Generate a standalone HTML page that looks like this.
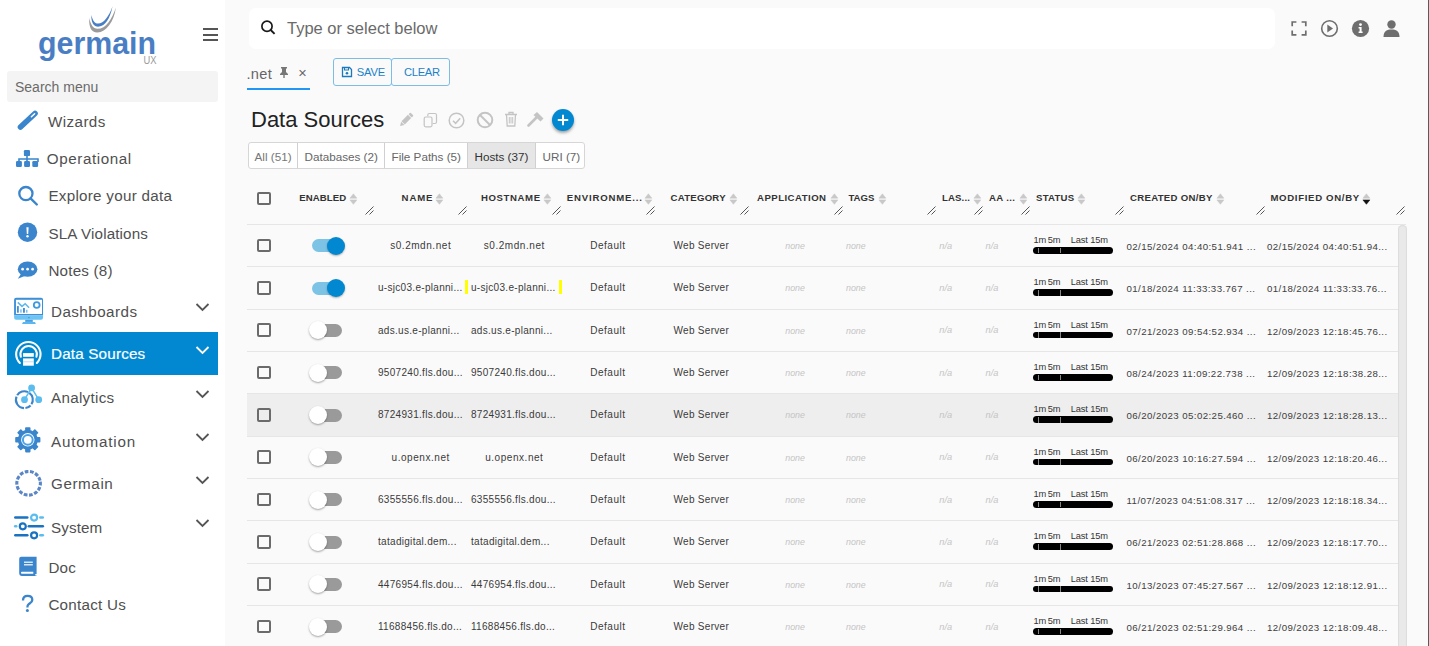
<!DOCTYPE html>
<html><head><meta charset="utf-8"><style>
html,body{margin:0;padding:0;width:1429px;height:646px;overflow:hidden;background:#fafafa;font-family:"Liberation Sans", sans-serif}
.a{position:absolute}
.t{position:absolute;line-height:1;white-space:nowrap}
</style></head><body>
<div class="a" style="left:0px;top:0px;width:225px;height:646px;background:#fff"></div>
<div class="a" style="left:225px;top:0px;width:1203px;height:646px;background:#fafafa"></div>
<div class="a" style="left:1428px;top:0px;width:1px;height:646px;background:#5a5a5a"></div>
<svg class="a" style="left:30px;top:0px" width="140" height="70" viewBox="0 0 140 70">
<path d="M59.3 18 C 58.5 28, 62 32.8, 67.5 32.5 C 76 32, 84 22, 85.9 7.4 C 82 19, 76 28.8, 67.5 28.8 C 63 28.8, 60.5 24, 59.3 18 Z" fill="#9b9b9b"/>
<path d="M61.4 14.9 C 61 23, 64 27, 69 26.6 C 75 26, 80 19, 82.5 6.5 C 79 16, 74 23.5, 68 23.5 C 64.5 23.5, 62.5 20, 61.4 14.9 Z" fill="#4a7ec4"/>
<text x="8" y="54" font-family="Liberation Sans" font-weight="700" font-size="32" fill="#4a7ec4" textLength="118" lengthAdjust="spacingAndGlyphs">germain</text>
<text x="113.5" y="64" font-family="Liberation Sans" font-size="10" fill="#999" textLength="13" lengthAdjust="spacingAndGlyphs">UX</text>
</svg>
<div class="a" style="left:203px;top:27.5px;width:14.5px;height:2.0px;background:#555"></div>
<div class="a" style="left:203px;top:33.5px;width:14.5px;height:2.0px;background:#555"></div>
<div class="a" style="left:203px;top:39.3px;width:14.5px;height:2.0px;background:#555"></div>
<div class="a" style="left:7px;top:71px;width:211px;height:31px;background:#f4f4f4;border-radius:3px"></div>
<div class="t" style="left:15.00px;top:80.15px;font-size:14px;color:#6b6b6b;font-weight:400;">Search menu</div>
<div class="a" style="left:7px;top:332px;width:211px;height:43px;background:#0288d1"></div>
<div class="t" style="left:48.00px;top:113.83px;font-size:15.2px;color:#505050;font-weight:400;letter-spacing:0.407px">Wizards</div>
<div class="t" style="left:46.80px;top:151.13px;font-size:15.2px;color:#505050;font-weight:400;letter-spacing:0.587px">Operational</div>
<div class="t" style="left:48.40px;top:188.03px;font-size:15.2px;color:#505050;font-weight:400;letter-spacing:0.28px">Explore your data</div>
<div class="t" style="left:48.40px;top:225.93px;font-size:15.2px;color:#505050;font-weight:400;letter-spacing:0.141px">SLA Violations</div>
<div class="t" style="left:48.40px;top:263.13px;font-size:15.2px;color:#505050;font-weight:400;letter-spacing:0.216px">Notes (8)</div>
<div class="t" style="left:51.00px;top:303.53px;font-size:15.2px;color:#505050;font-weight:400;letter-spacing:0.455px">Dashboards</div>
<div class="t" style="left:51.00px;top:346.23px;font-size:15.2px;color:#fff;font-weight:400;letter-spacing:0.199px;-webkit-text-stroke:0.2px #fff">Data Sources</div>
<div class="t" style="left:51.00px;top:390.43px;font-size:15.2px;color:#505050;font-weight:400;letter-spacing:0.302px">Analytics</div>
<div class="t" style="left:51.00px;top:433.83px;font-size:15.2px;color:#505050;font-weight:400;letter-spacing:0.819px">Automation</div>
<div class="t" style="left:51.00px;top:476.23px;font-size:15.2px;color:#505050;font-weight:400;letter-spacing:0.592px">Germain</div>
<div class="t" style="left:51.00px;top:519.63px;font-size:15.2px;color:#505050;font-weight:400;letter-spacing:0.112px">System</div>
<div class="t" style="left:48.40px;top:559.63px;font-size:15.2px;color:#505050;font-weight:400;letter-spacing:0.242px">Doc</div>
<div class="t" style="left:48.40px;top:597.23px;font-size:15.2px;color:#505050;font-weight:400;letter-spacing:0.264px">Contact Us</div>
<svg class="a" style="left:195px;top:301.6px" width="15" height="10" viewBox="0 0 15 10"><polyline points="1.5,2 7.5,8 13.5,2" fill="none" stroke="#555" stroke-width="1.8"/></svg>
<svg class="a" style="left:195px;top:345.3px" width="15" height="10" viewBox="0 0 15 10"><polyline points="1.5,2 7.5,8 13.5,2" fill="none" stroke="#fff" stroke-width="1.8"/></svg>
<svg class="a" style="left:195px;top:388.6px" width="15" height="10" viewBox="0 0 15 10"><polyline points="1.5,2 7.5,8 13.5,2" fill="none" stroke="#555" stroke-width="1.8"/></svg>
<svg class="a" style="left:195px;top:431.6px" width="15" height="10" viewBox="0 0 15 10"><polyline points="1.5,2 7.5,8 13.5,2" fill="none" stroke="#555" stroke-width="1.8"/></svg>
<svg class="a" style="left:195px;top:474.5px" width="15" height="10" viewBox="0 0 15 10"><polyline points="1.5,2 7.5,8 13.5,2" fill="none" stroke="#555" stroke-width="1.8"/></svg>
<svg class="a" style="left:195px;top:517.9px" width="15" height="10" viewBox="0 0 15 10"><polyline points="1.5,2 7.5,8 13.5,2" fill="none" stroke="#555" stroke-width="1.8"/></svg>
<svg class="a" style="left:12px;top:106px" width="30" height="30" viewBox="0 0 30 30"><line x1="8.5" y1="21.0" x2="23.0" y2="7.5" stroke="#3a85cc" stroke-width="5.6" stroke-linecap="round"/><line x1="19.4" y1="10.8" x2="22.6" y2="7.8" stroke="#fff" stroke-width="1.5" stroke-linecap="round"/></svg>
<svg class="a" style="left:14px;top:148px" width="26" height="21" viewBox="0 0 26 21"><rect x="9.9" y="2.1" width="6.1" height="6" rx="1.2" fill="#3a85cc"/><path d="M13 8V11 M5 14V11H24V14 M13 11V14" fill="none" stroke="#3a85cc" stroke-width="1.6"/><rect x="2" y="13" width="5.9" height="6" rx="1.2" fill="#3a85cc"/><rect x="10.1" y="13" width="5.9" height="6" rx="1.2" fill="#3a85cc"/><rect x="18.3" y="13" width="5.8" height="6" rx="1.2" fill="#3a85cc"/></svg>
<svg class="a" style="left:14px;top:184px" width="26" height="24" viewBox="0 0 26 24"><circle cx="11.9" cy="9.6" r="6.6" fill="none" stroke="#3a85cc" stroke-width="2.3"/><line x1="16.6" y1="14.3" x2="22.8" y2="20.5" stroke="#3a85cc" stroke-width="2.4" stroke-linecap="round"/></svg>
<svg class="a" style="left:14px;top:220px" width="26" height="25" viewBox="0 0 26 25"><circle cx="13.5" cy="12.2" r="9.7" fill="#3a85cc"/><path d="M12.4 7.3H14.6L14.2 14H12.8Z" fill="#fff"/><circle cx="13.5" cy="16.3" r="1.2" fill="#fff"/></svg>
<svg class="a" style="left:14px;top:259px" width="26" height="22" viewBox="0 0 26 22"><ellipse cx="13.6" cy="10.2" rx="9.8" ry="7.6" fill="#3a85cc"/><path d="M7 15 L3.8 19.7 L12 16.5 Z" fill="#3a85cc"/><circle cx="8.6" cy="10.2" r="1.35" fill="#fff"/><circle cx="13.6" cy="10.2" r="1.35" fill="#fff"/><circle cx="18.6" cy="10.2" r="1.35" fill="#fff"/></svg>
<svg class="a" style="left:13px;top:296px" width="32" height="30" viewBox="0 0 32 30"><path d="M1.1 19.6 V3.7 A2 2 0 0 1 3.1 1.7 H28.05 A2 2 0 0 1 30.05 3.7 V19.6 Z" fill="#3d8fd6"/><rect x="2.95" y="3.8" width="26.05" height="14.2" fill="#fff"/><path d="M1.1 19.6 H30.05 V21.8 A2 2 0 0 1 28.05 23.8 H3.1 A2 2 0 0 1 1.1 21.8 Z" fill="#6cc4f4"/><rect x="15.2" y="21.2" width="1.4" height="1" fill="#3d8fd6"/><rect x="12.2" y="23.8" width="7.6" height="2.1" fill="#4a9ee0"/><path d="M10 25.9 H22 L22.9 28 H9 Z" fill="#5ab8f0"/><rect x="4" y="10.1" width="1.8" height="6.6" fill="#3d8fd6"/><rect x="7.2" y="13.3" width="1.5" height="3.4" fill="#7cc0ee"/><rect x="10" y="12" width="1.9" height="4.7" fill="#3d8fd6"/><rect x="13" y="13.8" width="1.5" height="2.9" fill="#7cc0ee"/><polyline points="4.8,6.4 9,10.4 12.2,7.7 16.1,11.7" fill="none" stroke="#5ab8f0" stroke-width="1.5"/><circle cx="23.7" cy="9.05" r="2.9" fill="none" stroke="#3d9ae0" stroke-width="1.8"/></svg>
<svg class="a" style="left:13px;top:339px" width="32" height="30" viewBox="0 0 32 30"><path d="M6.88 23.98 A12.2 12.2 0 1 1 23.82 23.98" fill="none" stroke="#fff" stroke-width="2.1" stroke-linecap="round"/><path d="M7.85 17.73 A8.2 8.2 0 1 1 23.45 17.73" fill="none" stroke="#fff" stroke-width="2.0" stroke-linecap="round"/><rect x="10.05" y="14.1" width="10.75" height="3.7" fill="#fff"/><rect x="10.05" y="19.4" width="10.75" height="7.3" fill="#fff"/><rect x="10.05" y="22.5" width="10.75" height="0.7" fill="#9fd2ee"/></svg>
<svg class="a" style="left:12px;top:383px" width="32" height="28" viewBox="0 0 32 28"><path d="M17.32 9.86 A8.45 8.45 0 0 1 19.46 21.27 M18.56 22.43 A8.45 8.45 0 0 1 13.44 25.08 M11.97 25.14 A8.45 8.45 0 0 1 4.50 13.58 M5.16 12.26 A8.45 8.45 0 0 1 16.05 9.11" fill="none" stroke="#3a85cc" stroke-width="2.1"/><path d="M12.5 16.7 L19.6 4.9 L26.7 16.7" fill="none" stroke="#5bbcf0" stroke-width="1.5"/><circle cx="19.6" cy="4.9" r="3.4" fill="#5bbcf0"/><circle cx="12.5" cy="16.7" r="3.4" fill="#5bbcf0"/><circle cx="26.7" cy="16.7" r="3.4" fill="#5bbcf0"/></svg>
<svg class="a" style="left:12px;top:427px" width="32" height="27" viewBox="0 0 32 27"><rect x="13.100000000000001" y="0.20000000000000107" width="5.4" height="5" rx="0.8" fill="#3a85cc" transform="rotate(0 15.8 12.8)"/><rect x="13.100000000000001" y="0.20000000000000107" width="5.4" height="5" rx="0.8" fill="#3a85cc" transform="rotate(45 15.8 12.8)"/><rect x="13.100000000000001" y="0.20000000000000107" width="5.4" height="5" rx="0.8" fill="#3a85cc" transform="rotate(90 15.8 12.8)"/><rect x="13.100000000000001" y="0.20000000000000107" width="5.4" height="5" rx="0.8" fill="#3a85cc" transform="rotate(135 15.8 12.8)"/><rect x="13.100000000000001" y="0.20000000000000107" width="5.4" height="5" rx="0.8" fill="#3a85cc" transform="rotate(180 15.8 12.8)"/><rect x="13.100000000000001" y="0.20000000000000107" width="5.4" height="5" rx="0.8" fill="#3a85cc" transform="rotate(225 15.8 12.8)"/><rect x="13.100000000000001" y="0.20000000000000107" width="5.4" height="5" rx="0.8" fill="#3a85cc" transform="rotate(270 15.8 12.8)"/><rect x="13.100000000000001" y="0.20000000000000107" width="5.4" height="5" rx="0.8" fill="#3a85cc" transform="rotate(315 15.8 12.8)"/><circle cx="15.8" cy="12.8" r="10" fill="#3a85cc"/><circle cx="15.8" cy="12.8" r="6.7" fill="#fff"/><circle cx="15.8" cy="12.8" r="4.9" fill="none" stroke="#4aa3e6" stroke-width="2"/></svg>
<svg class="a" style="left:12px;top:467px" width="33" height="33" viewBox="0 0 33 33"><circle cx="16.6" cy="16.3" r="11.8" fill="none" stroke="#5a86c8" stroke-width="3.1" stroke-dasharray="3.75 1.55" transform="rotate(-8 16.6 16.3)"/></svg>
<svg class="a" style="left:12px;top:511px" width="33" height="30" viewBox="0 0 33 30"><line x1="3.3" y1="6.6" x2="15.3" y2="6.6" stroke="#1a72c0" stroke-width="2.5" stroke-linecap="round"/><circle cx="22.1" cy="6.6" r="3" fill="none" stroke="#5bbcf0" stroke-width="2.2"/><line x1="28.3" y1="6.6" x2="30.8" y2="6.6" stroke="#5bbcf0" stroke-width="2.5" stroke-linecap="round"/><line x1="3.2" y1="15.3" x2="4.2" y2="15.3" stroke="#5bbcf0" stroke-width="2.5" stroke-linecap="round"/><circle cx="10.8" cy="15.3" r="3" fill="none" stroke="#1a72c0" stroke-width="2.2"/><line x1="16.8" y1="15.3" x2="30.8" y2="15.3" stroke="#1a72c0" stroke-width="2.5" stroke-linecap="round"/><line x1="3.3" y1="24.3" x2="15.3" y2="24.3" stroke="#1a72c0" stroke-width="2.5" stroke-linecap="round"/><circle cx="22.1" cy="24.3" r="3" fill="none" stroke="#1a72c0" stroke-width="2.2"/><line x1="28.3" y1="24.3" x2="30.8" y2="24.3" stroke="#5bbcf0" stroke-width="2.5" stroke-linecap="round"/></svg>
<svg class="a" style="left:17px;top:554px" width="22" height="24" viewBox="0 0 22 24"><path d="M4.2 2.7 H19.6 V20 H18.3 V21.4 H19.6 V22 H5 A3 3 0 0 1 2.2 19 V4.7 A2 2 0 0 1 4.2 2.7Z" fill="#3a85cc"/><rect x="7" y="7.6" width="8.8" height="1.2" fill="#fff"/><rect x="7" y="10.2" width="8.8" height="1.2" fill="#fff"/><path d="M5 17.7 H16.3 V19.8 H5 A1 1 0 0 1 5 17.7Z" fill="#fff"/></svg>
<svg class="a" style="left:17px;top:592px" width="22" height="22" viewBox="0 0 22 22"><path d="M6 8.4 C6 5.3 7.9 3.9 10.6 3.9 C13.5 3.9 15.3 5.6 15.3 7.9 C15.3 10.3 13.2 11 11.5 12.3 C10.7 12.9 10.4 13.6 10.4 15.4" fill="none" stroke="#3a85cc" stroke-width="2.3"/><circle cx="10.4" cy="18.5" r="1.5" fill="#3a85cc"/></svg>
<div class="a" style="left:249px;top:8px;width:1026px;height:41px;background:#fff;border-radius:7px"></div>
<svg class="a" style="left:260px;top:20px" width="16" height="16" viewBox="0 0 16 16"><circle cx="7" cy="6.3" r="5.1" fill="none" stroke="#1a1a1a" stroke-width="1.7"/><line x1="10.7" y1="10.0" x2="14.6" y2="13.9" stroke="#1a1a1a" stroke-width="1.9" stroke-linecap="butt"/></svg>
<div class="t" style="left:287.00px;top:19.63px;font-size:16.5px;color:#6a6a6a;font-weight:400;">Type or select below</div>
<svg class="a" style="left:1290px;top:20px" width="18" height="17" viewBox="0 0 18 17"><path d="M2.2 6.2V2H6.4 M11.6 2H15.8V6.2 M15.8 10.6V14.8H11.6 M6.4 14.8H2.2V10.6" fill="none" stroke="#6e6e6e" stroke-width="1.7"/></svg>
<svg class="a" style="left:1320px;top:19px" width="19" height="19" viewBox="0 0 19 19"><circle cx="9.5" cy="9.5" r="7.8" fill="none" stroke="#6e6e6e" stroke-width="1.6"/><path d="M7.3 5.6 L13 9.5 L7.3 13.4 Z" fill="#6e6e6e"/></svg>
<svg class="a" style="left:1351px;top:19px" width="19" height="19" viewBox="0 0 19 19"><circle cx="9.5" cy="9.5" r="8.6" fill="#6e6e6e"/><circle cx="9.5" cy="5.6" r="1.4" fill="#fff"/><path d="M7.6 8H10.6V12.6H11.6V14H7.6V12.6H8.6V9.4H7.6Z" fill="#fff"/></svg>
<svg class="a" style="left:1382px;top:19px" width="19" height="19" viewBox="0 0 19 19"><circle cx="9.5" cy="5.5" r="4.2" fill="#6e6e6e"/><path d="M1.5 18 C1.5 12 5 10.5 9.5 10.5 C14 10.5 17.5 12 17.5 18 Z" fill="#6e6e6e"/></svg>
<div class="t" style="left:246.50px;top:66.84px;font-size:14.6px;color:#666;font-weight:400;letter-spacing:0.3px">.net</div>
<svg class="a" style="left:278px;top:66px" width="12" height="12" viewBox="0 0 12 12"><path d="M3 1H9V2.5H8V6L10 8V9H6.7V12H5.3V9H2V8L4 6V2.5H3Z" fill="#777"/></svg>
<div class="t" style="left:298.20px;top:65.73px;font-size:14.5px;color:#666;font-weight:400;">&#215;</div>
<div class="a" style="left:247px;top:87.8px;width:63px;height:2.200000000000003px;background:#2196f3"></div>
<div class="a" style="left:333px;top:58px;width:58.5px;height:28px;border:1px solid #7cbde6;border-radius:3px;box-sizing:border-box"></div>
<div class="a" style="left:391px;top:58px;width:59px;height:28px;border:1px solid #7cbde6;border-radius:3px;box-sizing:border-box"></div>
<svg class="a" style="left:341px;top:65.5px" width="12" height="12" viewBox="0 0 12 12"><path d="M1.5 1.5H8.5L10.5 3.5V10.5H1.5Z" fill="none" stroke="#1a7ac0" stroke-width="1.3"/><rect x="3.5" y="1.5" width="4" height="2.5" fill="none" stroke="#1a7ac0" stroke-width="1"/><circle cx="6" cy="7.3" r="1.3" fill="#1a7ac0"/></svg>
<div class="t" style="left:356.70px;top:67.42px;font-size:11.2px;color:#1c82c8;font-weight:400;letter-spacing:-0.2px">SAVE</div>
<div class="t" style="left:404.00px;top:67.42px;font-size:11.2px;color:#1c82c8;font-weight:400;letter-spacing:-0.3px">CLEAR</div>
<div class="t" style="left:251.00px;top:109.18px;font-size:22px;color:#222;font-weight:400;">Data Sources</div>
<svg class="a" style="left:397px;top:111px" width="18" height="18" viewBox="0 0 18 18"><g transform="rotate(45 9 9)"><rect x="6.7" y="0.6" width="4.6" height="2.6" rx="0.8" fill="#c4c4c4"/><rect x="6.7" y="4" width="4.6" height="9" fill="#c4c4c4"/><path d="M6.7 13.6 H11.3 L9 17.4 Z" fill="#c4c4c4"/></g></svg>
<svg class="a" style="left:423px;top:112px" width="15" height="16" viewBox="0 0 15 16"><rect x="1.2" y="5" width="7.8" height="9.8" rx="1.5" fill="none" stroke="#c4c4c4" stroke-width="1.2"/><path d="M4.8 4.2V3A1.5 1.5 0 0 1 6.3 1.5H12A1.5 1.5 0 0 1 13.5 3V10A1.5 1.5 0 0 1 12 11.5H9.8" fill="none" stroke="#c4c4c4" stroke-width="1.2"/></svg>
<svg class="a" style="left:448px;top:112px" width="17" height="17" viewBox="0 0 17 17"><circle cx="8.5" cy="8.5" r="7.3" fill="none" stroke="#c4c4c4" stroke-width="1.5"/><polyline points="5,8.8 7.6,11.3 12.2,6.2" fill="none" stroke="#c4c4c4" stroke-width="1.5"/></svg>
<svg class="a" style="left:476px;top:111px" width="18" height="18" viewBox="0 0 18 18"><circle cx="9" cy="9" r="7.3" fill="none" stroke="#c4c4c4" stroke-width="2"/><line x1="4" y1="4" x2="14" y2="14" stroke="#c4c4c4" stroke-width="2"/></svg>
<svg class="a" style="left:504px;top:111px" width="14" height="16" viewBox="0 0 14 16"><path d="M1 3.5H13 M5 3.5V1.5H9V3.5 M2.5 3.5L3.2 15H10.8L11.5 3.5" fill="none" stroke="#c4c4c4" stroke-width="1.3"/><path d="M5.3 6V12.5 M7 6V12.5 M8.7 6V12.5" stroke="#c4c4c4" stroke-width="1"/></svg>
<svg class="a" style="left:527px;top:111px" width="18" height="17" viewBox="0 0 18 17"><path d="M1.5 14.5 L9.5 6.5" stroke="#c4c4c4" stroke-width="2.6" stroke-linecap="round"/><path d="M6.5 4 L10 1 L16.5 7.5 L13.5 10.5 Z" fill="#c4c4c4"/></svg>
<div class="a" style="left:552px;top:109.3px;width:22px;height:22px;border-radius:50%;background:#0288d1;box-shadow:0 2px 3px rgba(0,0,0,0.35)"></div>
<svg class="a" style="left:552px;top:109.3px" width="22" height="22" viewBox="0 0 22 22"><path d="M11 5.8V16.2 M5.8 11H16.2" stroke="#fff" stroke-width="2"/></svg>
<div class="a" style="left:247.5px;top:142.4px;width:337.5px;height:26.19999999999999px;border:1px solid #d6d6d6;border-radius:3px;box-sizing:border-box;background:#fff"></div>
<div class="a" style="left:467px;top:143.4px;width:68px;height:24.19999999999999px;background:#e6e6e6"></div>
<div class="a" style="left:297px;top:143px;width:1px;height:25px;background:#d0d0d0"></div>
<div class="a" style="left:384px;top:143px;width:1px;height:25px;background:#d0d0d0"></div>
<div class="a" style="left:467px;top:143px;width:1px;height:25px;background:#d0d0d0"></div>
<div class="a" style="left:535px;top:143px;width:1px;height:25px;background:#d0d0d0"></div>
<div class="t" style="left:254.50px;top:151.10px;font-size:11.7px;color:#777;font-weight:400;">All (51)</div>
<div class="t" style="left:304.50px;top:151.10px;font-size:11.7px;color:#666;font-weight:400;">Databases (2)</div>
<div class="t" style="left:391.50px;top:151.10px;font-size:11.7px;color:#666;font-weight:400;">File Paths (5)</div>
<div class="t" style="left:474.50px;top:151.10px;font-size:11.7px;color:#333;font-weight:400;">Hosts (37)</div>
<div class="t" style="left:542.50px;top:151.10px;font-size:11.7px;color:#666;font-weight:400;">URI (7)</div>
<div class="a" style="left:257px;top:191.5px;width:14px;height:13.5px;border:2px solid #6b6b6b;border-radius:2px;box-sizing:border-box"></div>
<div class="t" style="left:299.20px;top:192.87px;font-size:9.6px;color:#333;font-weight:700;letter-spacing:0.121px">ENABLED</div>
<svg class="a" style="left:349.09999999999997px;top:192.5px" width="9" height="12" viewBox="0 0 9 12"><path d="M0.9 5.2L4.4 0.8L7.9 5.2Z" fill="#c8c8c8" stroke="#c8c8c8" stroke-width="0.5" stroke-linejoin="round"/><path d="M0.9 6.9L4.4 11.3L7.9 6.9Z" fill="#c8c8c8" stroke="#c8c8c8" stroke-width="0.5" stroke-linejoin="round"/></svg>
<div class="t" style="left:401.60px;top:192.87px;font-size:9.6px;color:#333;font-weight:700;letter-spacing:0.883px">NAME</div>
<svg class="a" style="left:434.7px;top:192.5px" width="9" height="12" viewBox="0 0 9 12"><path d="M0.9 5.2L4.4 0.8L7.9 5.2Z" fill="#c8c8c8" stroke="#c8c8c8" stroke-width="0.5" stroke-linejoin="round"/><path d="M0.9 6.9L4.4 11.3L7.9 6.9Z" fill="#c8c8c8" stroke="#c8c8c8" stroke-width="0.5" stroke-linejoin="round"/></svg>
<div class="t" style="left:481.00px;top:192.87px;font-size:9.6px;color:#333;font-weight:700;letter-spacing:0.599px">HOSTNAME</div>
<svg class="a" style="left:542.7px;top:192.5px" width="9" height="12" viewBox="0 0 9 12"><path d="M0.9 5.2L4.4 0.8L7.9 5.2Z" fill="#c8c8c8" stroke="#c8c8c8" stroke-width="0.5" stroke-linejoin="round"/><path d="M0.9 6.9L4.4 11.3L7.9 6.9Z" fill="#c8c8c8" stroke="#c8c8c8" stroke-width="0.5" stroke-linejoin="round"/></svg>
<div class="t" style="left:566.80px;top:192.87px;font-size:9.6px;color:#333;font-weight:700;letter-spacing:0.826px">ENVIRONME...</div>
<svg class="a" style="left:644.4000000000001px;top:192.5px" width="9" height="12" viewBox="0 0 9 12"><path d="M0.9 5.2L4.4 0.8L7.9 5.2Z" fill="#c8c8c8" stroke="#c8c8c8" stroke-width="0.5" stroke-linejoin="round"/><path d="M0.9 6.9L4.4 11.3L7.9 6.9Z" fill="#c8c8c8" stroke="#c8c8c8" stroke-width="0.5" stroke-linejoin="round"/></svg>
<div class="t" style="left:670.50px;top:192.87px;font-size:9.6px;color:#333;font-weight:700;letter-spacing:0.255px">CATEGORY</div>
<svg class="a" style="left:728.7px;top:192.5px" width="9" height="12" viewBox="0 0 9 12"><path d="M0.9 5.2L4.4 0.8L7.9 5.2Z" fill="#c8c8c8" stroke="#c8c8c8" stroke-width="0.5" stroke-linejoin="round"/><path d="M0.9 6.9L4.4 11.3L7.9 6.9Z" fill="#c8c8c8" stroke="#c8c8c8" stroke-width="0.5" stroke-linejoin="round"/></svg>
<div class="t" style="left:757.00px;top:192.87px;font-size:9.6px;color:#333;font-weight:700;letter-spacing:0.469px">APPLICATION</div>
<svg class="a" style="left:829.7px;top:192.5px" width="9" height="12" viewBox="0 0 9 12"><path d="M0.9 5.2L4.4 0.8L7.9 5.2Z" fill="#c8c8c8" stroke="#c8c8c8" stroke-width="0.5" stroke-linejoin="round"/><path d="M0.9 6.9L4.4 11.3L7.9 6.9Z" fill="#c8c8c8" stroke="#c8c8c8" stroke-width="0.5" stroke-linejoin="round"/></svg>
<div class="t" style="left:848.40px;top:192.87px;font-size:9.6px;color:#333;font-weight:700;letter-spacing:-0.012px">TAGS</div>
<svg class="a" style="left:877.5px;top:192.5px" width="9" height="12" viewBox="0 0 9 12"><path d="M0.9 5.2L4.4 0.8L7.9 5.2Z" fill="#c8c8c8" stroke="#c8c8c8" stroke-width="0.5" stroke-linejoin="round"/><path d="M0.9 6.9L4.4 11.3L7.9 6.9Z" fill="#c8c8c8" stroke="#c8c8c8" stroke-width="0.5" stroke-linejoin="round"/></svg>
<div class="t" style="left:942.00px;top:192.87px;font-size:9.6px;color:#333;font-weight:700;letter-spacing:0.143px">LAS...</div>
<svg class="a" style="left:972.7px;top:192.5px" width="9" height="12" viewBox="0 0 9 12"><path d="M0.9 5.2L4.4 0.8L7.9 5.2Z" fill="#c8c8c8" stroke="#c8c8c8" stroke-width="0.5" stroke-linejoin="round"/><path d="M0.9 6.9L4.4 11.3L7.9 6.9Z" fill="#c8c8c8" stroke="#c8c8c8" stroke-width="0.5" stroke-linejoin="round"/></svg>
<div class="t" style="left:988.90px;top:192.87px;font-size:9.6px;color:#333;font-weight:700;letter-spacing:0.366px">AA ...</div>
<svg class="a" style="left:1018.7px;top:192.5px" width="9" height="12" viewBox="0 0 9 12"><path d="M0.9 5.2L4.4 0.8L7.9 5.2Z" fill="#c8c8c8" stroke="#c8c8c8" stroke-width="0.5" stroke-linejoin="round"/><path d="M0.9 6.9L4.4 11.3L7.9 6.9Z" fill="#c8c8c8" stroke="#c8c8c8" stroke-width="0.5" stroke-linejoin="round"/></svg>
<div class="t" style="left:1036.00px;top:192.87px;font-size:9.6px;color:#333;font-weight:700;letter-spacing:0.229px">STATUS</div>
<svg class="a" style="left:1076.7px;top:192.5px" width="9" height="12" viewBox="0 0 9 12"><path d="M0.9 5.2L4.4 0.8L7.9 5.2Z" fill="#c8c8c8" stroke="#c8c8c8" stroke-width="0.5" stroke-linejoin="round"/><path d="M0.9 6.9L4.4 11.3L7.9 6.9Z" fill="#c8c8c8" stroke="#c8c8c8" stroke-width="0.5" stroke-linejoin="round"/></svg>
<div class="t" style="left:1130.00px;top:192.87px;font-size:9.6px;color:#333;font-weight:700;letter-spacing:0.298px">CREATED ON/BY</div>
<svg class="a" style="left:1215.7px;top:192.5px" width="9" height="12" viewBox="0 0 9 12"><path d="M0.9 5.2L4.4 0.8L7.9 5.2Z" fill="#c8c8c8" stroke="#c8c8c8" stroke-width="0.5" stroke-linejoin="round"/><path d="M0.9 6.9L4.4 11.3L7.9 6.9Z" fill="#c8c8c8" stroke="#c8c8c8" stroke-width="0.5" stroke-linejoin="round"/></svg>
<div class="t" style="left:1270.40px;top:192.87px;font-size:9.6px;color:#333;font-weight:700;letter-spacing:0.681px">MODIFIED ON/BY</div>
<svg class="a" style="left:1361.7px;top:192.5px" width="9" height="12" viewBox="0 0 9 12"><path d="M0.9 5.2L4.4 0.8L7.9 5.2Z" fill="#c8c8c8" stroke="#c8c8c8" stroke-width="0.5" stroke-linejoin="round"/><path d="M0.9 6.9L4.4 11.3L7.9 6.9Z" fill="#111" stroke="#111" stroke-width="0.5" stroke-linejoin="round"/></svg>
<svg class="a" style="left:365.1px;top:205.5px" width="9" height="9" viewBox="0 0 9 9"><path d="M0.5 8.5L8.5 0.5 M4.5 8.5L8.5 4.5" stroke="#444" stroke-width="0.9"/></svg>
<svg class="a" style="left:458.1px;top:205.5px" width="9" height="9" viewBox="0 0 9 9"><path d="M0.5 8.5L8.5 0.5 M4.5 8.5L8.5 4.5" stroke="#444" stroke-width="0.9"/></svg>
<svg class="a" style="left:552.2px;top:205.5px" width="9" height="9" viewBox="0 0 9 9"><path d="M0.5 8.5L8.5 0.5 M4.5 8.5L8.5 4.5" stroke="#444" stroke-width="0.9"/></svg>
<svg class="a" style="left:646.2px;top:205.5px" width="9" height="9" viewBox="0 0 9 9"><path d="M0.5 8.5L8.5 0.5 M4.5 8.5L8.5 4.5" stroke="#444" stroke-width="0.9"/></svg>
<svg class="a" style="left:740.1px;top:205.5px" width="9" height="9" viewBox="0 0 9 9"><path d="M0.5 8.5L8.5 0.5 M4.5 8.5L8.5 4.5" stroke="#444" stroke-width="0.9"/></svg>
<svg class="a" style="left:834px;top:205.5px" width="9" height="9" viewBox="0 0 9 9"><path d="M0.5 8.5L8.5 0.5 M4.5 8.5L8.5 4.5" stroke="#444" stroke-width="0.9"/></svg>
<svg class="a" style="left:927px;top:205.5px" width="9" height="9" viewBox="0 0 9 9"><path d="M0.5 8.5L8.5 0.5 M4.5 8.5L8.5 4.5" stroke="#444" stroke-width="0.9"/></svg>
<svg class="a" style="left:974px;top:205.5px" width="9" height="9" viewBox="0 0 9 9"><path d="M0.5 8.5L8.5 0.5 M4.5 8.5L8.5 4.5" stroke="#444" stroke-width="0.9"/></svg>
<svg class="a" style="left:1021px;top:205.5px" width="9" height="9" viewBox="0 0 9 9"><path d="M0.5 8.5L8.5 0.5 M4.5 8.5L8.5 4.5" stroke="#444" stroke-width="0.9"/></svg>
<svg class="a" style="left:1115.2px;top:205.5px" width="9" height="9" viewBox="0 0 9 9"><path d="M0.5 8.5L8.5 0.5 M4.5 8.5L8.5 4.5" stroke="#444" stroke-width="0.9"/></svg>
<svg class="a" style="left:1256.2px;top:205.5px" width="9" height="9" viewBox="0 0 9 9"><path d="M0.5 8.5L8.5 0.5 M4.5 8.5L8.5 4.5" stroke="#444" stroke-width="0.9"/></svg>
<svg class="a" style="left:1396.4px;top:205.5px" width="9" height="9" viewBox="0 0 9 9"><path d="M0.5 8.5L8.5 0.5 M4.5 8.5L8.5 4.5" stroke="#444" stroke-width="0.9"/></svg>
<div class="a" style="left:247px;top:224px;width:1159px;height:1px;background:#e6e6e6"></div>
<div class="a" style="left:247px;top:266.33299999999997px;width:1151px;height:1.0px;background:#e6e6e6"></div>
<div class="a" style="left:257px;top:238.8px;width:14px;height:13.5px;border:2px solid #6b6b6b;border-radius:2px;box-sizing:border-box"></div>
<div class="a" style="left:312px;top:239.20000000000002px;width:30px;height:13.0px;background:#7cc3e6;border-radius:7px"></div>
<div class="a" style="left:327px;top:236.70px;width:18px;height:18px;border-radius:50%;background:#0288d1;box-shadow:0 1px 2px rgba(0,0,0,0.3)"></div>
<div class="t" style="left:220.70px;width:400px;text-align:center;top:241.03px;font-size:10px;color:#3a3a3a;font-weight:400;letter-spacing:0.55px">s0.2mdn.net</div>
<div class="t" style="left:314.30px;width:400px;text-align:center;top:241.03px;font-size:10px;color:#3a3a3a;font-weight:400;letter-spacing:0.55px">s0.2mdn.net</div>
<div class="t" style="left:407.90px;width:400px;text-align:center;top:241.03px;font-size:10px;color:#3a3a3a;font-weight:400;letter-spacing:0.5px">Default</div>
<div class="t" style="left:501.30px;width:400px;text-align:center;top:241.03px;font-size:10px;color:#3a3a3a;font-weight:400;letter-spacing:0.28px">Web Server</div>
<div class="t" style="left:595.10px;width:400px;text-align:center;top:242.05px;font-size:8.8px;color:#c4c4c4;font-weight:400;font-style:italic">none</div>
<div class="t" style="left:846.00px;top:242.05px;font-size:8.8px;color:#c4c4c4;font-weight:400;font-style:italic">none</div>
<div class="t" style="left:939.30px;top:241.71px;font-size:9.2px;color:#c4c4c4;font-weight:400;font-style:italic">n/a</div>
<div class="t" style="left:985.60px;top:241.71px;font-size:9.2px;color:#c4c4c4;font-weight:400;font-style:italic">n/a</div>
<div class="t" style="left:1033.50px;top:235.93px;font-size:9.3px;color:#333;font-weight:400;letter-spacing:-0.1px">1m</div>
<div class="t" style="left:1047.70px;top:235.93px;font-size:9.3px;color:#333;font-weight:400;letter-spacing:-0.1px">5m</div>
<div class="t" style="left:1070.80px;top:235.93px;font-size:9.3px;color:#333;font-weight:400;letter-spacing:-0.15px">Last 15m</div>
<div class="a" style="left:1033.3px;top:247.10000000000002px;width:79.5px;height:6.599999999999994px;background:#000;border-radius:4px"></div>
<div class="a" style="left:1038px;top:247.60000000000002px;width:0.7999999999999545px;height:5.599999999999994px;background:#888"></div>
<div class="a" style="left:1060.3px;top:247.60000000000002px;width:0.7999999999999545px;height:5.599999999999994px;background:#888"></div>
<div class="t" style="left:1126.50px;top:242.09px;font-size:9.7px;color:#404040;font-weight:400;letter-spacing:0.41px">02/15/2024 04:40:51.941 ...</div>
<div class="t" style="left:1267.00px;top:242.09px;font-size:9.7px;color:#404040;font-weight:400;letter-spacing:0.405px">02/15/2024 04:40:51.94...</div>
<div class="a" style="left:247px;top:308.66599999999994px;width:1151px;height:1.0px;background:#e6e6e6"></div>
<div class="a" style="left:257px;top:281.13300000000004px;width:14px;height:13.5px;border:2px solid #6b6b6b;border-radius:2px;box-sizing:border-box"></div>
<div class="a" style="left:312px;top:281.533px;width:30px;height:13.0px;background:#7cc3e6;border-radius:7px"></div>
<div class="a" style="left:327px;top:279.03px;width:18px;height:18px;border-radius:50%;background:#0288d1;box-shadow:0 1px 2px rgba(0,0,0,0.3)"></div>
<div class="t" style="left:378.00px;top:283.37px;font-size:10px;color:#3a3a3a;font-weight:400;letter-spacing:0.3px">u-sjc03.e-planni...</div>
<div class="t" style="left:471.00px;top:283.37px;font-size:10px;color:#3a3a3a;font-weight:400;letter-spacing:0.3px">u-sjc03.e-planni...</div>
<div class="t" style="left:407.90px;width:400px;text-align:center;top:283.37px;font-size:10px;color:#3a3a3a;font-weight:400;letter-spacing:0.5px">Default</div>
<div class="t" style="left:501.30px;width:400px;text-align:center;top:283.37px;font-size:10px;color:#3a3a3a;font-weight:400;letter-spacing:0.28px">Web Server</div>
<div class="t" style="left:595.10px;width:400px;text-align:center;top:284.38px;font-size:8.8px;color:#c4c4c4;font-weight:400;font-style:italic">none</div>
<div class="t" style="left:846.00px;top:284.38px;font-size:8.8px;color:#c4c4c4;font-weight:400;font-style:italic">none</div>
<div class="t" style="left:939.30px;top:284.05px;font-size:9.2px;color:#c4c4c4;font-weight:400;font-style:italic">n/a</div>
<div class="t" style="left:985.60px;top:284.05px;font-size:9.2px;color:#c4c4c4;font-weight:400;font-style:italic">n/a</div>
<div class="t" style="left:1033.50px;top:278.26px;font-size:9.3px;color:#333;font-weight:400;letter-spacing:-0.1px">1m</div>
<div class="t" style="left:1047.70px;top:278.26px;font-size:9.3px;color:#333;font-weight:400;letter-spacing:-0.1px">5m</div>
<div class="t" style="left:1070.80px;top:278.26px;font-size:9.3px;color:#333;font-weight:400;letter-spacing:-0.15px">Last 15m</div>
<div class="a" style="left:1033.3px;top:289.43300000000005px;width:79.5px;height:6.599999999999966px;background:#000;border-radius:4px"></div>
<div class="a" style="left:1038px;top:289.93300000000005px;width:0.7999999999999545px;height:5.599999999999966px;background:#888"></div>
<div class="a" style="left:1060.3px;top:289.93300000000005px;width:0.7999999999999545px;height:5.599999999999966px;background:#888"></div>
<div class="t" style="left:1126.50px;top:284.42px;font-size:9.7px;color:#404040;font-weight:400;letter-spacing:0.41px">01/18/2024 11:33:33.767 ...</div>
<div class="t" style="left:1267.00px;top:284.42px;font-size:9.7px;color:#404040;font-weight:400;letter-spacing:0.405px">01/18/2024 11:33:33.76...</div>
<div class="a" style="left:465px;top:279.833px;width:3px;height:14.100000000000023px;background:#ffff00"></div>
<div class="a" style="left:559px;top:279.833px;width:3px;height:14.100000000000023px;background:#ffff00"></div>
<div class="a" style="left:247px;top:350.999px;width:1151px;height:1.0px;background:#e6e6e6"></div>
<div class="a" style="left:257px;top:323.466px;width:14px;height:13.5px;border:2px solid #6b6b6b;border-radius:2px;box-sizing:border-box"></div>
<div class="a" style="left:312px;top:323.866px;width:30px;height:13.0px;background:#9a9a9a;border-radius:7px"></div>
<div class="a" style="left:309px;top:321.37px;width:18px;height:18px;border-radius:50%;background:#fff;box-shadow:0 1px 2px rgba(0,0,0,0.35)"></div>
<div class="t" style="left:378.00px;top:325.70px;font-size:10px;color:#3a3a3a;font-weight:400;letter-spacing:0.3px">ads.us.e-planni...</div>
<div class="t" style="left:471.00px;top:325.70px;font-size:10px;color:#3a3a3a;font-weight:400;letter-spacing:0.3px">ads.us.e-planni...</div>
<div class="t" style="left:407.90px;width:400px;text-align:center;top:325.70px;font-size:10px;color:#3a3a3a;font-weight:400;letter-spacing:0.5px">Default</div>
<div class="t" style="left:501.30px;width:400px;text-align:center;top:325.70px;font-size:10px;color:#3a3a3a;font-weight:400;letter-spacing:0.28px">Web Server</div>
<div class="t" style="left:595.10px;width:400px;text-align:center;top:326.72px;font-size:8.8px;color:#c4c4c4;font-weight:400;font-style:italic">none</div>
<div class="t" style="left:846.00px;top:326.72px;font-size:8.8px;color:#c4c4c4;font-weight:400;font-style:italic">none</div>
<div class="t" style="left:939.30px;top:326.38px;font-size:9.2px;color:#c4c4c4;font-weight:400;font-style:italic">n/a</div>
<div class="t" style="left:985.60px;top:326.38px;font-size:9.2px;color:#c4c4c4;font-weight:400;font-style:italic">n/a</div>
<div class="t" style="left:1033.50px;top:320.59px;font-size:9.3px;color:#333;font-weight:400;letter-spacing:-0.1px">1m</div>
<div class="t" style="left:1047.70px;top:320.59px;font-size:9.3px;color:#333;font-weight:400;letter-spacing:-0.1px">5m</div>
<div class="t" style="left:1070.80px;top:320.59px;font-size:9.3px;color:#333;font-weight:400;letter-spacing:-0.15px">Last 15m</div>
<div class="a" style="left:1033.3px;top:331.766px;width:79.5px;height:6.599999999999966px;background:#000;border-radius:4px"></div>
<div class="a" style="left:1038px;top:332.266px;width:0.7999999999999545px;height:5.599999999999966px;background:#888"></div>
<div class="a" style="left:1060.3px;top:332.266px;width:0.7999999999999545px;height:5.599999999999966px;background:#888"></div>
<div class="t" style="left:1126.50px;top:326.75px;font-size:9.7px;color:#404040;font-weight:400;letter-spacing:0.41px">07/21/2023 09:54:52.934 ...</div>
<div class="t" style="left:1267.00px;top:326.75px;font-size:9.7px;color:#404040;font-weight:400;letter-spacing:0.405px">12/09/2023 12:18:45.76...</div>
<div class="a" style="left:247px;top:393.332px;width:1151px;height:1.0px;background:#e6e6e6"></div>
<div class="a" style="left:257px;top:365.799px;width:14px;height:13.5px;border:2px solid #6b6b6b;border-radius:2px;box-sizing:border-box"></div>
<div class="a" style="left:312px;top:366.19899999999996px;width:30px;height:13.0px;background:#9a9a9a;border-radius:7px"></div>
<div class="a" style="left:309px;top:363.70px;width:18px;height:18px;border-radius:50%;background:#fff;box-shadow:0 1px 2px rgba(0,0,0,0.35)"></div>
<div class="t" style="left:378.00px;top:368.03px;font-size:10px;color:#3a3a3a;font-weight:400;letter-spacing:0.3px">9507240.fls.dou...</div>
<div class="t" style="left:471.00px;top:368.03px;font-size:10px;color:#3a3a3a;font-weight:400;letter-spacing:0.3px">9507240.fls.dou...</div>
<div class="t" style="left:407.90px;width:400px;text-align:center;top:368.03px;font-size:10px;color:#3a3a3a;font-weight:400;letter-spacing:0.5px">Default</div>
<div class="t" style="left:501.30px;width:400px;text-align:center;top:368.03px;font-size:10px;color:#3a3a3a;font-weight:400;letter-spacing:0.28px">Web Server</div>
<div class="t" style="left:595.10px;width:400px;text-align:center;top:369.05px;font-size:8.8px;color:#c4c4c4;font-weight:400;font-style:italic">none</div>
<div class="t" style="left:846.00px;top:369.05px;font-size:8.8px;color:#c4c4c4;font-weight:400;font-style:italic">none</div>
<div class="t" style="left:939.30px;top:368.71px;font-size:9.2px;color:#c4c4c4;font-weight:400;font-style:italic">n/a</div>
<div class="t" style="left:985.60px;top:368.71px;font-size:9.2px;color:#c4c4c4;font-weight:400;font-style:italic">n/a</div>
<div class="t" style="left:1033.50px;top:362.93px;font-size:9.3px;color:#333;font-weight:400;letter-spacing:-0.1px">1m</div>
<div class="t" style="left:1047.70px;top:362.93px;font-size:9.3px;color:#333;font-weight:400;letter-spacing:-0.1px">5m</div>
<div class="t" style="left:1070.80px;top:362.93px;font-size:9.3px;color:#333;font-weight:400;letter-spacing:-0.15px">Last 15m</div>
<div class="a" style="left:1033.3px;top:374.099px;width:79.5px;height:6.599999999999966px;background:#000;border-radius:4px"></div>
<div class="a" style="left:1038px;top:374.599px;width:0.7999999999999545px;height:5.599999999999966px;background:#888"></div>
<div class="a" style="left:1060.3px;top:374.599px;width:0.7999999999999545px;height:5.599999999999966px;background:#888"></div>
<div class="t" style="left:1126.50px;top:369.09px;font-size:9.7px;color:#404040;font-weight:400;letter-spacing:0.41px">08/24/2023 11:09:22.738 ...</div>
<div class="t" style="left:1267.00px;top:369.09px;font-size:9.7px;color:#404040;font-weight:400;letter-spacing:0.405px">12/09/2023 12:18:38.28...</div>
<div class="a" style="left:247px;top:394.332px;width:1151px;height:41.33299999999997px;background:#eeeeee"></div>
<div class="a" style="left:247px;top:435.66499999999996px;width:1151px;height:1.0px;background:#e6e6e6"></div>
<div class="a" style="left:257px;top:408.132px;width:14px;height:13.5px;border:2px solid #6b6b6b;border-radius:2px;box-sizing:border-box"></div>
<div class="a" style="left:312px;top:408.532px;width:30px;height:13.0px;background:#9a9a9a;border-radius:7px"></div>
<div class="a" style="left:309px;top:406.03px;width:18px;height:18px;border-radius:50%;background:#fff;box-shadow:0 1px 2px rgba(0,0,0,0.35)"></div>
<div class="t" style="left:378.00px;top:410.37px;font-size:10px;color:#3a3a3a;font-weight:400;letter-spacing:0.3px">8724931.fls.dou...</div>
<div class="t" style="left:471.00px;top:410.37px;font-size:10px;color:#3a3a3a;font-weight:400;letter-spacing:0.3px">8724931.fls.dou...</div>
<div class="t" style="left:407.90px;width:400px;text-align:center;top:410.37px;font-size:10px;color:#3a3a3a;font-weight:400;letter-spacing:0.5px">Default</div>
<div class="t" style="left:501.30px;width:400px;text-align:center;top:410.37px;font-size:10px;color:#3a3a3a;font-weight:400;letter-spacing:0.28px">Web Server</div>
<div class="t" style="left:595.10px;width:400px;text-align:center;top:411.38px;font-size:8.8px;color:#c4c4c4;font-weight:400;font-style:italic">none</div>
<div class="t" style="left:846.00px;top:411.38px;font-size:8.8px;color:#c4c4c4;font-weight:400;font-style:italic">none</div>
<div class="t" style="left:939.30px;top:411.04px;font-size:9.2px;color:#c4c4c4;font-weight:400;font-style:italic">n/a</div>
<div class="t" style="left:985.60px;top:411.04px;font-size:9.2px;color:#c4c4c4;font-weight:400;font-style:italic">n/a</div>
<div class="t" style="left:1033.50px;top:405.26px;font-size:9.3px;color:#333;font-weight:400;letter-spacing:-0.1px">1m</div>
<div class="t" style="left:1047.70px;top:405.26px;font-size:9.3px;color:#333;font-weight:400;letter-spacing:-0.1px">5m</div>
<div class="t" style="left:1070.80px;top:405.26px;font-size:9.3px;color:#333;font-weight:400;letter-spacing:-0.15px">Last 15m</div>
<div class="a" style="left:1033.3px;top:416.432px;width:79.5px;height:6.599999999999966px;background:#000;border-radius:4px"></div>
<div class="a" style="left:1038px;top:416.932px;width:0.7999999999999545px;height:5.599999999999966px;background:#888"></div>
<div class="a" style="left:1060.3px;top:416.932px;width:0.7999999999999545px;height:5.599999999999966px;background:#888"></div>
<div class="t" style="left:1126.50px;top:411.42px;font-size:9.7px;color:#404040;font-weight:400;letter-spacing:0.41px">06/20/2023 05:02:25.460 ...</div>
<div class="t" style="left:1267.00px;top:411.42px;font-size:9.7px;color:#404040;font-weight:400;letter-spacing:0.405px">12/09/2023 12:18:28.13...</div>
<div class="a" style="left:247px;top:477.99799999999993px;width:1151px;height:1.0px;background:#e6e6e6"></div>
<div class="a" style="left:257px;top:450.46500000000003px;width:14px;height:13.5px;border:2px solid #6b6b6b;border-radius:2px;box-sizing:border-box"></div>
<div class="a" style="left:312px;top:450.865px;width:30px;height:13.0px;background:#9a9a9a;border-radius:7px"></div>
<div class="a" style="left:309px;top:448.37px;width:18px;height:18px;border-radius:50%;background:#fff;box-shadow:0 1px 2px rgba(0,0,0,0.35)"></div>
<div class="t" style="left:220.70px;width:400px;text-align:center;top:452.70px;font-size:10px;color:#3a3a3a;font-weight:400;letter-spacing:0.55px">u.openx.net</div>
<div class="t" style="left:314.30px;width:400px;text-align:center;top:452.70px;font-size:10px;color:#3a3a3a;font-weight:400;letter-spacing:0.55px">u.openx.net</div>
<div class="t" style="left:407.90px;width:400px;text-align:center;top:452.70px;font-size:10px;color:#3a3a3a;font-weight:400;letter-spacing:0.5px">Default</div>
<div class="t" style="left:501.30px;width:400px;text-align:center;top:452.70px;font-size:10px;color:#3a3a3a;font-weight:400;letter-spacing:0.28px">Web Server</div>
<div class="t" style="left:595.10px;width:400px;text-align:center;top:453.72px;font-size:8.8px;color:#c4c4c4;font-weight:400;font-style:italic">none</div>
<div class="t" style="left:846.00px;top:453.72px;font-size:8.8px;color:#c4c4c4;font-weight:400;font-style:italic">none</div>
<div class="t" style="left:939.30px;top:453.38px;font-size:9.2px;color:#c4c4c4;font-weight:400;font-style:italic">n/a</div>
<div class="t" style="left:985.60px;top:453.38px;font-size:9.2px;color:#c4c4c4;font-weight:400;font-style:italic">n/a</div>
<div class="t" style="left:1033.50px;top:447.59px;font-size:9.3px;color:#333;font-weight:400;letter-spacing:-0.1px">1m</div>
<div class="t" style="left:1047.70px;top:447.59px;font-size:9.3px;color:#333;font-weight:400;letter-spacing:-0.1px">5m</div>
<div class="t" style="left:1070.80px;top:447.59px;font-size:9.3px;color:#333;font-weight:400;letter-spacing:-0.15px">Last 15m</div>
<div class="a" style="left:1033.3px;top:458.76500000000004px;width:79.5px;height:6.599999999999966px;background:#000;border-radius:4px"></div>
<div class="a" style="left:1038px;top:459.26500000000004px;width:0.7999999999999545px;height:5.599999999999966px;background:#888"></div>
<div class="a" style="left:1060.3px;top:459.26500000000004px;width:0.7999999999999545px;height:5.599999999999966px;background:#888"></div>
<div class="t" style="left:1126.50px;top:453.75px;font-size:9.7px;color:#404040;font-weight:400;letter-spacing:0.41px">06/20/2023 10:16:27.594 ...</div>
<div class="t" style="left:1267.00px;top:453.75px;font-size:9.7px;color:#404040;font-weight:400;letter-spacing:0.405px">12/09/2023 12:18:20.46...</div>
<div class="a" style="left:247px;top:520.331px;width:1151px;height:1.0px;background:#e6e6e6"></div>
<div class="a" style="left:257px;top:492.798px;width:14px;height:13.5px;border:2px solid #6b6b6b;border-radius:2px;box-sizing:border-box"></div>
<div class="a" style="left:312px;top:493.198px;width:30px;height:13.0px;background:#9a9a9a;border-radius:7px"></div>
<div class="a" style="left:309px;top:490.70px;width:18px;height:18px;border-radius:50%;background:#fff;box-shadow:0 1px 2px rgba(0,0,0,0.35)"></div>
<div class="t" style="left:378.00px;top:495.03px;font-size:10px;color:#3a3a3a;font-weight:400;letter-spacing:0.3px">6355556.fls.dou...</div>
<div class="t" style="left:471.00px;top:495.03px;font-size:10px;color:#3a3a3a;font-weight:400;letter-spacing:0.3px">6355556.fls.dou...</div>
<div class="t" style="left:407.90px;width:400px;text-align:center;top:495.03px;font-size:10px;color:#3a3a3a;font-weight:400;letter-spacing:0.5px">Default</div>
<div class="t" style="left:501.30px;width:400px;text-align:center;top:495.03px;font-size:10px;color:#3a3a3a;font-weight:400;letter-spacing:0.28px">Web Server</div>
<div class="t" style="left:595.10px;width:400px;text-align:center;top:496.05px;font-size:8.8px;color:#c4c4c4;font-weight:400;font-style:italic">none</div>
<div class="t" style="left:846.00px;top:496.05px;font-size:8.8px;color:#c4c4c4;font-weight:400;font-style:italic">none</div>
<div class="t" style="left:939.30px;top:495.71px;font-size:9.2px;color:#c4c4c4;font-weight:400;font-style:italic">n/a</div>
<div class="t" style="left:985.60px;top:495.71px;font-size:9.2px;color:#c4c4c4;font-weight:400;font-style:italic">n/a</div>
<div class="t" style="left:1033.50px;top:489.93px;font-size:9.3px;color:#333;font-weight:400;letter-spacing:-0.1px">1m</div>
<div class="t" style="left:1047.70px;top:489.93px;font-size:9.3px;color:#333;font-weight:400;letter-spacing:-0.1px">5m</div>
<div class="t" style="left:1070.80px;top:489.93px;font-size:9.3px;color:#333;font-weight:400;letter-spacing:-0.15px">Last 15m</div>
<div class="a" style="left:1033.3px;top:501.098px;width:79.5px;height:6.599999999999966px;background:#000;border-radius:4px"></div>
<div class="a" style="left:1038px;top:501.598px;width:0.7999999999999545px;height:5.599999999999966px;background:#888"></div>
<div class="a" style="left:1060.3px;top:501.598px;width:0.7999999999999545px;height:5.599999999999966px;background:#888"></div>
<div class="t" style="left:1126.50px;top:496.09px;font-size:9.7px;color:#404040;font-weight:400;letter-spacing:0.41px">11/07/2023 04:51:08.317 ...</div>
<div class="t" style="left:1267.00px;top:496.09px;font-size:9.7px;color:#404040;font-weight:400;letter-spacing:0.405px">12/09/2023 12:18:18.34...</div>
<div class="a" style="left:247px;top:562.664px;width:1151px;height:1.0px;background:#e6e6e6"></div>
<div class="a" style="left:257px;top:535.1310000000001px;width:14px;height:13.5px;border:2px solid #6b6b6b;border-radius:2px;box-sizing:border-box"></div>
<div class="a" style="left:312px;top:535.5310000000001px;width:30px;height:13.0px;background:#9a9a9a;border-radius:7px"></div>
<div class="a" style="left:309px;top:533.03px;width:18px;height:18px;border-radius:50%;background:#fff;box-shadow:0 1px 2px rgba(0,0,0,0.35)"></div>
<div class="t" style="left:378.00px;top:537.37px;font-size:10px;color:#3a3a3a;font-weight:400;letter-spacing:0.3px">tatadigital.dem...</div>
<div class="t" style="left:471.00px;top:537.37px;font-size:10px;color:#3a3a3a;font-weight:400;letter-spacing:0.3px">tatadigital.dem...</div>
<div class="t" style="left:407.90px;width:400px;text-align:center;top:537.37px;font-size:10px;color:#3a3a3a;font-weight:400;letter-spacing:0.5px">Default</div>
<div class="t" style="left:501.30px;width:400px;text-align:center;top:537.37px;font-size:10px;color:#3a3a3a;font-weight:400;letter-spacing:0.28px">Web Server</div>
<div class="t" style="left:595.10px;width:400px;text-align:center;top:538.38px;font-size:8.8px;color:#c4c4c4;font-weight:400;font-style:italic">none</div>
<div class="t" style="left:846.00px;top:538.38px;font-size:8.8px;color:#c4c4c4;font-weight:400;font-style:italic">none</div>
<div class="t" style="left:939.30px;top:538.04px;font-size:9.2px;color:#c4c4c4;font-weight:400;font-style:italic">n/a</div>
<div class="t" style="left:985.60px;top:538.04px;font-size:9.2px;color:#c4c4c4;font-weight:400;font-style:italic">n/a</div>
<div class="t" style="left:1033.50px;top:532.26px;font-size:9.3px;color:#333;font-weight:400;letter-spacing:-0.1px">1m</div>
<div class="t" style="left:1047.70px;top:532.26px;font-size:9.3px;color:#333;font-weight:400;letter-spacing:-0.1px">5m</div>
<div class="t" style="left:1070.80px;top:532.26px;font-size:9.3px;color:#333;font-weight:400;letter-spacing:-0.15px">Last 15m</div>
<div class="a" style="left:1033.3px;top:543.431px;width:79.5px;height:6.600000000000023px;background:#000;border-radius:4px"></div>
<div class="a" style="left:1038px;top:543.931px;width:0.7999999999999545px;height:5.600000000000023px;background:#888"></div>
<div class="a" style="left:1060.3px;top:543.931px;width:0.7999999999999545px;height:5.600000000000023px;background:#888"></div>
<div class="t" style="left:1126.50px;top:538.42px;font-size:9.7px;color:#404040;font-weight:400;letter-spacing:0.41px">06/21/2023 02:51:28.868 ...</div>
<div class="t" style="left:1267.00px;top:538.42px;font-size:9.7px;color:#404040;font-weight:400;letter-spacing:0.405px">12/09/2023 12:18:17.70...</div>
<div class="a" style="left:247px;top:604.997px;width:1151px;height:1.0px;background:#e6e6e6"></div>
<div class="a" style="left:257px;top:577.4639999999999px;width:14px;height:13.5px;border:2px solid #6b6b6b;border-radius:2px;box-sizing:border-box"></div>
<div class="a" style="left:312px;top:577.8639999999999px;width:30px;height:13.0px;background:#9a9a9a;border-radius:7px"></div>
<div class="a" style="left:309px;top:575.36px;width:18px;height:18px;border-radius:50%;background:#fff;box-shadow:0 1px 2px rgba(0,0,0,0.35)"></div>
<div class="t" style="left:378.00px;top:579.70px;font-size:10px;color:#3a3a3a;font-weight:400;letter-spacing:0.3px">4476954.fls.dou...</div>
<div class="t" style="left:471.00px;top:579.70px;font-size:10px;color:#3a3a3a;font-weight:400;letter-spacing:0.3px">4476954.fls.dou...</div>
<div class="t" style="left:407.90px;width:400px;text-align:center;top:579.70px;font-size:10px;color:#3a3a3a;font-weight:400;letter-spacing:0.5px">Default</div>
<div class="t" style="left:501.30px;width:400px;text-align:center;top:579.70px;font-size:10px;color:#3a3a3a;font-weight:400;letter-spacing:0.28px">Web Server</div>
<div class="t" style="left:595.10px;width:400px;text-align:center;top:580.71px;font-size:8.8px;color:#c4c4c4;font-weight:400;font-style:italic">none</div>
<div class="t" style="left:846.00px;top:580.71px;font-size:8.8px;color:#c4c4c4;font-weight:400;font-style:italic">none</div>
<div class="t" style="left:939.30px;top:580.38px;font-size:9.2px;color:#c4c4c4;font-weight:400;font-style:italic">n/a</div>
<div class="t" style="left:985.60px;top:580.38px;font-size:9.2px;color:#c4c4c4;font-weight:400;font-style:italic">n/a</div>
<div class="t" style="left:1033.50px;top:574.59px;font-size:9.3px;color:#333;font-weight:400;letter-spacing:-0.1px">1m</div>
<div class="t" style="left:1047.70px;top:574.59px;font-size:9.3px;color:#333;font-weight:400;letter-spacing:-0.1px">5m</div>
<div class="t" style="left:1070.80px;top:574.59px;font-size:9.3px;color:#333;font-weight:400;letter-spacing:-0.15px">Last 15m</div>
<div class="a" style="left:1033.3px;top:585.7639999999999px;width:79.5px;height:6.600000000000023px;background:#000;border-radius:4px"></div>
<div class="a" style="left:1038px;top:586.2639999999999px;width:0.7999999999999545px;height:5.600000000000023px;background:#888"></div>
<div class="a" style="left:1060.3px;top:586.2639999999999px;width:0.7999999999999545px;height:5.600000000000023px;background:#888"></div>
<div class="t" style="left:1126.50px;top:580.75px;font-size:9.7px;color:#404040;font-weight:400;letter-spacing:0.41px">10/13/2023 07:45:27.567 ...</div>
<div class="t" style="left:1267.00px;top:580.75px;font-size:9.7px;color:#404040;font-weight:400;letter-spacing:0.405px">12/09/2023 12:18:12.91...</div>
<div class="a" style="left:247px;top:647.3299999999999px;width:1151px;height:1.0px;background:#e6e6e6"></div>
<div class="a" style="left:257px;top:619.797px;width:14px;height:13.5px;border:2px solid #6b6b6b;border-radius:2px;box-sizing:border-box"></div>
<div class="a" style="left:312px;top:620.197px;width:30px;height:13.0px;background:#9a9a9a;border-radius:7px"></div>
<div class="a" style="left:309px;top:617.70px;width:18px;height:18px;border-radius:50%;background:#fff;box-shadow:0 1px 2px rgba(0,0,0,0.35)"></div>
<div class="t" style="left:378.00px;top:622.03px;font-size:10px;color:#3a3a3a;font-weight:400;letter-spacing:0.3px">11688456.fls.do...</div>
<div class="t" style="left:471.00px;top:622.03px;font-size:10px;color:#3a3a3a;font-weight:400;letter-spacing:0.3px">11688456.fls.do...</div>
<div class="t" style="left:407.90px;width:400px;text-align:center;top:622.03px;font-size:10px;color:#3a3a3a;font-weight:400;letter-spacing:0.5px">Default</div>
<div class="t" style="left:501.30px;width:400px;text-align:center;top:622.03px;font-size:10px;color:#3a3a3a;font-weight:400;letter-spacing:0.28px">Web Server</div>
<div class="t" style="left:595.10px;width:400px;text-align:center;top:623.05px;font-size:8.8px;color:#c4c4c4;font-weight:400;font-style:italic">none</div>
<div class="t" style="left:846.00px;top:623.05px;font-size:8.8px;color:#c4c4c4;font-weight:400;font-style:italic">none</div>
<div class="t" style="left:939.30px;top:622.71px;font-size:9.2px;color:#c4c4c4;font-weight:400;font-style:italic">n/a</div>
<div class="t" style="left:985.60px;top:622.71px;font-size:9.2px;color:#c4c4c4;font-weight:400;font-style:italic">n/a</div>
<div class="t" style="left:1033.50px;top:616.92px;font-size:9.3px;color:#333;font-weight:400;letter-spacing:-0.1px">1m</div>
<div class="t" style="left:1047.70px;top:616.92px;font-size:9.3px;color:#333;font-weight:400;letter-spacing:-0.1px">5m</div>
<div class="t" style="left:1070.80px;top:616.92px;font-size:9.3px;color:#333;font-weight:400;letter-spacing:-0.15px">Last 15m</div>
<div class="a" style="left:1033.3px;top:628.097px;width:79.5px;height:6.600000000000023px;background:#000;border-radius:4px"></div>
<div class="a" style="left:1038px;top:628.597px;width:0.7999999999999545px;height:5.600000000000023px;background:#888"></div>
<div class="a" style="left:1060.3px;top:628.597px;width:0.7999999999999545px;height:5.600000000000023px;background:#888"></div>
<div class="t" style="left:1126.50px;top:623.09px;font-size:9.7px;color:#404040;font-weight:400;letter-spacing:0.41px">06/21/2023 02:51:29.964 ...</div>
<div class="t" style="left:1267.00px;top:623.09px;font-size:9.7px;color:#404040;font-weight:400;letter-spacing:0.405px">12/09/2023 12:18:09.48...</div>
<div class="a" style="left:1398px;top:224.5px;width:9px;height:455.5px;background:#e9e9e9;border-radius:5px;box-shadow:inset 0 0 1px 1px #dcdcdc"></div>
</body></html>
